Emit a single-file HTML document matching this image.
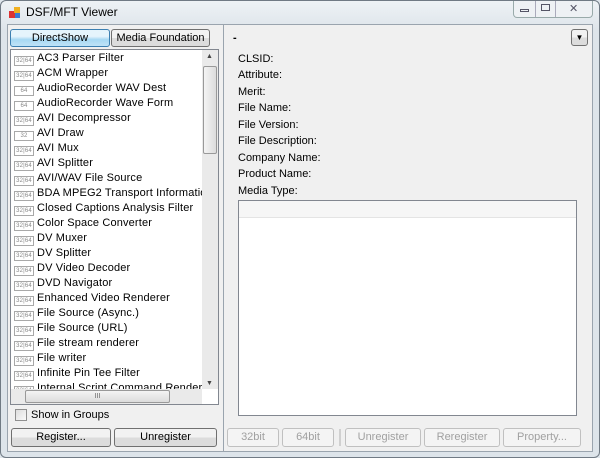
<!DOCTYPE html><html><head><style>
*{box-sizing:border-box;margin:0;padding:0}
body{width:600px;height:458px;background:#dfe6ec;font-family:"Liberation Sans",sans-serif;font-size:11px;color:#000;position:relative;overflow:hidden}
.abs{position:absolute}
.win{left:0;top:0;width:600px;height:458px;border:1px solid #707a84;border-radius:6px;background:linear-gradient(#eef2f5,#dde4ea 30px,#dde4ea)}
.client{left:7px;top:24px;width:586px;height:428px;background:#f0f0f0;border:1px solid #9aa4ae}
.btn{position:absolute;border:1px solid #707070;border-radius:3px;background:linear-gradient(#f2f2f2 50%,#dcdcdc 50%);text-align:center;font-size:11px;line-height:16px}
.dis{border-color:#c0c0c0;background:#f4f4f4;color:#a0a0a0}
.row{position:absolute;left:3px;height:15px;line-height:15px;white-space:nowrap;font-size:11px;letter-spacing:0.15px}
.bd{display:inline-block;width:20px;height:10px;border:1px solid #a8a8a8;font-size:6px;line-height:8px;text-align:center;color:#888;margin-right:3px;vertical-align:-1px}
.lbl{position:absolute;left:238px;font-size:11px}
</style></head><body>
<div class="abs win"></div>
<svg class="abs" style="left:9px;top:7px" width="12" height="12"><rect x="0" y="4" width="6" height="7" fill="#d33"/><rect x="5" y="0" width="6" height="6" fill="#f0b020"/><rect x="6" y="6" width="5" height="5" fill="#3a7bd5"/></svg>
<div class="abs" style="left:26px;top:5px;font-size:12px">DSF/MFT Viewer</div>
<div class="abs" style="left:513px;top:1px;width:80px;height:17px;border:1px solid #9aa;border-top:none;border-radius:0 0 4px 4px;background:#eef1f4"></div>
<div class="abs" style="left:535px;top:1px;width:1px;height:16px;background:#aab"></div>
<div class="abs" style="left:555px;top:1px;width:1px;height:16px;background:#aab"></div>
<div class="abs" style="left:520px;top:9px;width:9px;height:3px;border:1px solid #556"></div>
<div class="abs" style="left:541px;top:4px;width:9px;height:7px;border:1px solid #556"></div>
<div class="abs" style="left:569px;top:2px;font-size:11px;color:#556">✕</div>
<div class="abs client"></div>
<div class="btn" style="left:10px;top:29px;width:100px;height:18px;border-color:#3c7fb1;background:linear-gradient(#e5f4fc 40%,#a7d8f3 60%,#bfe3f7)">DirectShow</div>
<div class="btn" style="left:111px;top:29px;width:99px;height:18px">Media Foundation</div>
<div class="abs" style="left:10px;top:49px;width:209px;height:356px;background:#fff;border:1px solid #828790"></div>
<div class="abs" style="left:11px;top:50px;width:191px;height:339px;overflow:hidden">
<div class="row" style="top:1px"><span class="bd">32|64</span>AC3 Parser Filter</div>
<div class="row" style="top:16px"><span class="bd">32|64</span>ACM Wrapper</div>
<div class="row" style="top:31px"><span class="bd">64</span>AudioRecorder WAV Dest</div>
<div class="row" style="top:46px"><span class="bd">64</span>AudioRecorder Wave Form</div>
<div class="row" style="top:61px"><span class="bd">32|64</span>AVI Decompressor</div>
<div class="row" style="top:76px"><span class="bd">32</span>AVI Draw</div>
<div class="row" style="top:91px"><span class="bd">32|64</span>AVI Mux</div>
<div class="row" style="top:106px"><span class="bd">32|64</span>AVI Splitter</div>
<div class="row" style="top:121px"><span class="bd">32|64</span>AVI/WAV File Source</div>
<div class="row" style="top:136px"><span class="bd">32|64</span>BDA MPEG2 Transport Information Filter</div>
<div class="row" style="top:151px"><span class="bd">32|64</span>Closed Captions Analysis Filter</div>
<div class="row" style="top:166px"><span class="bd">32|64</span>Color Space Converter</div>
<div class="row" style="top:181px"><span class="bd">32|64</span>DV Muxer</div>
<div class="row" style="top:196px"><span class="bd">32|64</span>DV Splitter</div>
<div class="row" style="top:211px"><span class="bd">32|64</span>DV Video Decoder</div>
<div class="row" style="top:226px"><span class="bd">32|64</span>DVD Navigator</div>
<div class="row" style="top:241px"><span class="bd">32|64</span>Enhanced Video Renderer</div>
<div class="row" style="top:256px"><span class="bd">32|64</span>File Source (Async.)</div>
<div class="row" style="top:271px"><span class="bd">32|64</span>File Source (URL)</div>
<div class="row" style="top:286px"><span class="bd">32|64</span>File stream renderer</div>
<div class="row" style="top:301px"><span class="bd">32|64</span>File writer</div>
<div class="row" style="top:316px"><span class="bd">32|64</span>Infinite Pin Tee Filter</div>
<div class="row" style="top:331px"><span class="bd">32|64</span>Internal Script Command Renderer</div>
</div>
<div class="abs" style="left:202px;top:50px;width:16px;height:339px;background:#eaeaea"></div>
<div class="abs" style="left:206px;top:53px;font-size:7px;color:#444">▲</div>
<div class="abs" style="left:203px;top:66px;width:14px;height:88px;border:1px solid #999;border-radius:2px;background:linear-gradient(90deg,#f4f4f4,#dcdcdc)"></div>
<div class="abs" style="left:206px;top:380px;font-size:7px;color:#444">▼</div>
<div class="abs" style="left:11px;top:389px;width:191px;height:15px;background:#eaeaea"></div>
<div class="abs" style="left:25px;top:390px;width:145px;height:13px;border:1px solid #999;border-radius:2px;background:linear-gradient(#f4f4f4,#dcdcdc);text-align:center;font-size:7px;line-height:11px;color:#666">III</div>
<div class="abs" style="left:15px;top:409px;width:12px;height:12px;border:1px solid #8f8f8f;background:linear-gradient(135deg,#ddd,#fafafa)"></div>
<div class="abs" style="left:31px;top:409px">Show in Groups</div>
<div class="btn" style="left:11px;top:428px;width:100px;height:19px">Register...</div>
<div class="btn" style="left:114px;top:428px;width:103px;height:19px">Unregister</div>
<div class="abs" style="left:223px;top:24px;width:1px;height:428px;background:#9aa4ae"></div>
<div class="abs" style="left:233px;top:32px;font-weight:bold">-</div>
<div class="btn" style="left:571px;top:29px;width:17px;height:17px;font-size:8px;line-height:15px">▼</div>
<div class="lbl" style="top:53px">CLSID:</div>
<div class="lbl" style="top:69px">Attribute:</div>
<div class="lbl" style="top:86px">Merit:</div>
<div class="lbl" style="top:102px">File Name:</div>
<div class="lbl" style="top:119px">File Version:</div>
<div class="lbl" style="top:135px">File Description:</div>
<div class="lbl" style="top:152px">Company Name:</div>
<div class="lbl" style="top:168px">Product Name:</div>
<div class="lbl" style="top:185px">Media Type:</div>
<div class="abs" style="left:238px;top:200px;width:339px;height:216px;background:#fff;border:1px solid #828790"></div>
<div class="abs" style="left:239px;top:201px;width:337px;height:17px;background:#f6f6f6;border-bottom:1px solid #e4e4e4"></div>
<div class="btn dis" style="left:227px;top:428px;width:52px;height:19px">32bit</div>
<div class="btn dis" style="left:282px;top:428px;width:52px;height:19px">64bit</div>
<div class="abs" style="left:339px;top:429px;width:2px;height:17px;background:#d0d0d0"></div>
<div class="btn dis" style="left:345px;top:428px;width:76px;height:19px">Unregister</div>
<div class="btn dis" style="left:424px;top:428px;width:76px;height:19px">Reregister</div>
<div class="btn dis" style="left:503px;top:428px;width:78px;height:19px">Property...</div>
</body></html>
